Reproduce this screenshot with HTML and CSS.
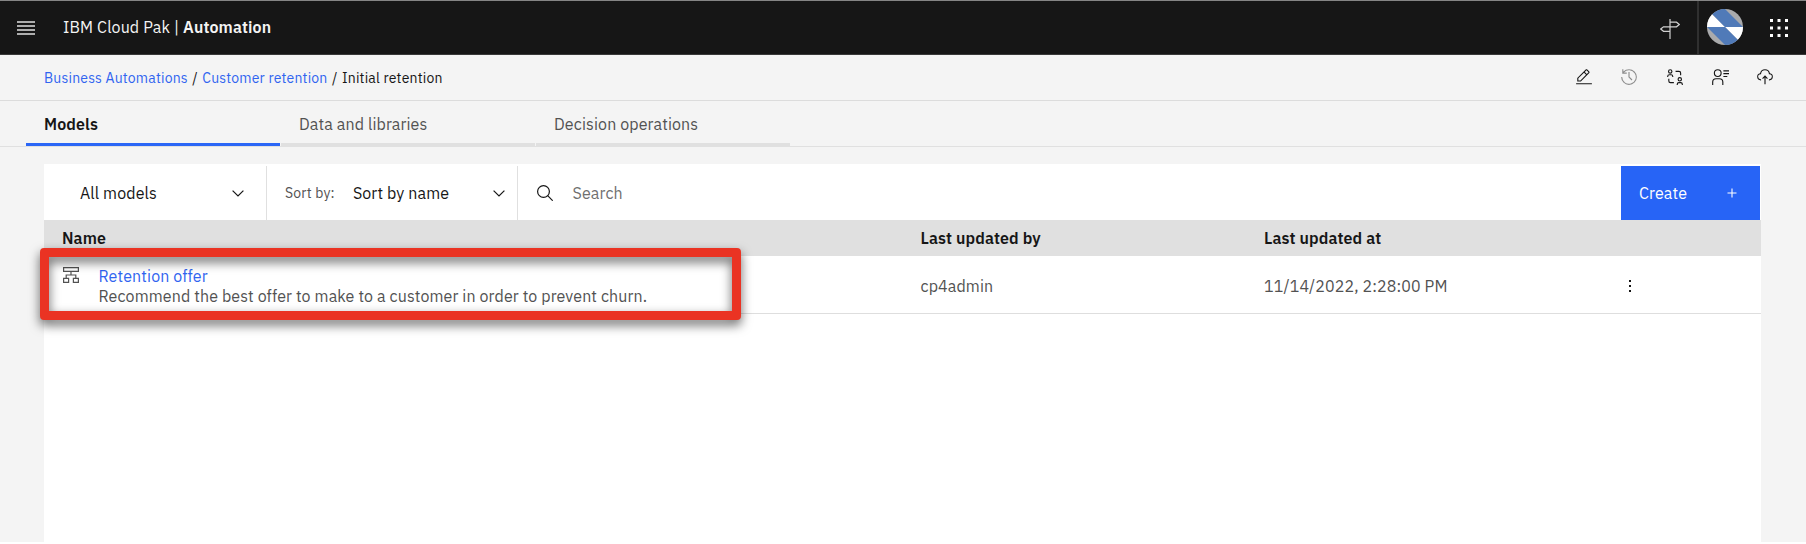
FILE: index.html
```html
<!DOCTYPE html>
<html lang="en">
<head>
<meta charset="utf-8">
<title>IBM Cloud Pak | Automation</title>
<link rel="stylesheet" href="styles.css">
</head>
<body>
<header class="header">
  <svg class="menu" viewBox="0 0 18 14"><path d="M0 1h18M0 5h18M0 9h18M0 13h18"/></svg>
  <div class="brand"><span>IBM Cloud Pak |</span><b>Automation</b></div>
  <svg class="sign" viewBox="0 0 20 20"><path d="M10 0v20M10 3.200h6.500l2.800 2.300-2.800 2.300H3.500L.7 10l2.800 2.300H10"/></svg>
  <div class="account"><svg class="avatar" viewBox="0 0 36 36"><defs><clipPath id="disc"><circle cx="18" cy="18" r="18"/></clipPath></defs><g clip-path="url(#disc)"><path fill="#a9aaac" d="M0 0h36v36H0z"/><path fill="#fff" d="M0 0L18 18H0zM18 18h18v18z"/><path fill="#507ab8" d="M0 0h18l18 18H18zM0 18h18l18 18H18z"/></g></svg></div>
  <svg class="apps" viewBox="0 0 18 18"><path d="M0 0h3v3H0zM7.500 0h3v3h-3zM15 0h3v3h-3zM0 7.500h3v3H0zM7.500 7.500h3v3h-3zM15 7.500h3v3h-3zM0 15h3v3H0zM7.500 15h3v3h-3zM15 15h3v3h-3z"/></svg>
</header>
<nav class="crumbs">
  <a>Business Automations</a><i>/</i><a>Customer retention</a><i>/</i><span>Initial retention</span>
  <div class="tools">
    <svg viewBox="0 0 32 32"><path d="M2 27h28v2H2zM25.400 9c.8-.8.8-2 0-2.800l-3.600-3.600c-.8-.8-2-.8-2.800 0l-15 15V24h6.400l15-15zm-5-5L24 7.600l-3 3L17.400 7l3-3zM6 22v-3.600l10-10 3.600 3.600-10 10H6z"/></svg>
    <svg class="dim" viewBox="0 0 32 32"><path d="M20.590 22 15 16.410V7h2v8.580l5 5.010L20.590 22zM16 2A13.940 13.940 0 0 0 6 6.230V2H4v8h8V8H7.080A12 12 0 1 1 4 16H2A14 14 0 1 0 16 2z"/></svg>
    <svg viewBox="0 0 32 32"><path d="M24.500 24a4 4 0 1 1 0-8 4 4 0 0 1 0 8m0-6a2 2 0 1 0 0 4 2 2 0 0 0 0-4M30 30h-2v-1a2 2 0 0 0-2-2h-3a2 2 0 0 0-2 2v1h-2v-1a4 4 0 0 1 4-4h3a4 4 0 0 1 4 4zM7.500 10a4 4 0 1 1 0-8 4 4 0 0 1 0 8m0-6a2 2 0 1 0 0 4 2 2 0 0 0 0-4M13 16h-2v-1a2 2 0 0 0-2-2H6a2 2 0 0 0-2 2v1H2v-1a4 4 0 0 1 4-4h3a4 4 0 0 1 4 4zM17 5h6a4 4 0 0 1 4 4v4h-2V9a2 2 0 0 0-2-2h-6zM4 19h2v4a2 2 0 0 0 2 2h6v2H8a4 4 0 0 1-4-4z"/></svg>
    <svg viewBox="0 0 32 32"><path d="M22 4h10v2H22zM22 9h10v2H22zM22 14h7v2h-7zM22 30h-2v-5a5 5 0 0 0-5-5H9a5 5 0 0 0-5 5v5H2v-5a7 7 0 0 1 7-7h6a7 7 0 0 1 7 7zM12 4a5 5 0 1 1-5 5 5 5 0 0 1 5-5m0-2a7 7 0 1 0 0 14 7 7 0 0 0 0-14z"/></svg>
    <svg viewBox="0 0 32 32"><path d="m11 18 1.410 1.410L15 16.830V29h2V16.830l2.590 2.580L21 18l-5-5-5 5z"/><path d="M23.500 22H23v-2h.5a4.500 4.500 0 0 0 .36-9H23l-.1-.82a7 7 0 0 0-13.880 0L9 11h-.86a4.500 4.500 0 0 0 .36 9H9v2h-.5A6.500 6.500 0 0 1 7.200 9.140a9 9 0 0 1 17.600 0A6.500 6.500 0 0 1 23.500 22z"/></svg>
  </div>
</nav>
<div class="tabs">
  <div class="tab active">Models</div>
  <div class="tab">Data and libraries</div>
  <div class="tab">Decision operations</div>
</div>
<main class="panel">
  <div class="toolbar">
    <div class="filter"><span>All models</span><svg class="chev" viewBox="0 0 12 7"><path d="M.6.6 6 6 11.400.6"/></svg></div>
    <div class="sort"><small>Sort by:</small><span>Sort by name</span><svg class="chev" viewBox="0 0 12 7"><path d="M.6.6 6 6 11.400.6"/></svg></div>
    <div class="search"><svg class="lens" viewBox="0 0 16 16"><circle cx="6.500" cy="6.500" r="5.900"/><path d="m10.700 10.700 5 5"/></svg><span>Search</span></div>
    <div class="create"><span>Create</span><svg class="plus" viewBox="0 0 10 10"><path d="M5 .5v9M.5 5h9"/></svg></div>
  </div>
  <div class="row head"><div class="name">Name</div><div class="by">Last updated by</div><div class="at">Last updated at</div></div>
  <div class="row item">
    <div class="name">
      <svg class="model" viewBox="0 0 16 16"><path d="M.6.6h14.800v3.800H.6zM8 4.400V8M3.200 11.400V8h9.600v3.400M.6 11.400h5v4h-5zM10.400 11.400h5v4h-5z"/></svg>
      <div class="desc"><a>Retention offer</a><span>Recommend the best offer to make to a customer in order to prevent churn.</span></div>
    </div>
    <div class="by">cp4admin</div>
    <div class="at">11/14/2022, 2:28:00 PM</div>
    <svg class="dots" viewBox="0 0 2 12"><path d="M0 0h2v2H0zM0 5h2v2H0zM0 10h2v2H0z"/></svg>
  </div>
</main>
<div class="highlight"></div>
</body>
</html>
```
FILE: styles.css
```css
* { box-sizing: border-box; }
body { margin: 0; height: 544px; overflow: hidden; display: flex; flex-direction: column; background: #f4f4f4; border-bottom: 2px solid #fff; color: #161616; font: 16px/20px "IBM Plex Sans", Roboto, sans-serif; letter-spacing: .115px; white-space: nowrap; }
svg { display: block; flex: none; }
.header { height: 55px; flex: none; display: flex; align-items: center; padding: 0 18px 0 17px; background: #161616; border-top: 1px solid #858585; border-bottom: 1px solid #393939; color: #f4f4f4; }
.menu { width: 18px; height: 14px; stroke: #e0e0e0; stroke-width: 1.5; }
.brand { display: flex; gap: 4px; margin: 0 0 1px 28px; flex: 1; }
.brand b { font-weight: 600; }
.sign { width: 20px; height: 20px; margin: 3px 17px 0 0; fill: none; stroke: #d0d0d0; stroke-width: 1.2; }
.account { height: 53px; border-left: 2px solid #303030; padding: 8px 0 0 8px; }
.avatar { width: 36px; height: 36px; }
.apps { width: 18px; height: 18px; margin-left: 27px; fill: #fff; }
.crumbs { height: 46px; flex: none; display: flex; align-items: center; padding: 0 32px 0 44px; border-bottom: 1px solid #dcdcdc; font-size: 14px; letter-spacing: .18px; }
.crumbs i { width: 14.5px; text-align: center; font-style: normal; }
a { color: #3064f0; }
.tools { display: flex; gap: 27.25px; margin: 0 0 1px auto; }
.tools svg { width: 18px; height: 18px; fill: #161616; }
.tools .dim { fill: #8d8d8d; }
.tabs { height: 46px; flex: none; display: flex; gap: 1px; padding-left: 26px; border-bottom: 1px solid #e0e0e0; color: #525252; }
.tab { width: 254px; height: 45px; padding: 13px 18px; border-bottom: 3px solid #e0e0e0; }
.tab.active { border-color: #2a66f6; color: #161616; font-weight: 600; }
.panel { width: 1717px; margin: 17px 0 0 44px; flex: 1; background: #fff; }
.toolbar { height: 56px; display: flex; padding: 2px 1px 0 0; }
.toolbar > div { display: flex; align-items: center; }
.chev { width: 12px; height: 7px; margin-left: auto; fill: none; stroke: #161616; stroke-width: 1.2; }
.filter { width: 223px; padding: 0 22px 0 36px; border-right: 1px solid #e0e0e0; }
.sort { width: 251px; padding: 0 12px 0 18px; border-right: 1px solid #e0e0e0; }
.sort small { font-size: 14px; margin-right: 18px; color: #525252; letter-spacing: .17px; }
.search { flex: 1; padding-left: 19px; color: #6f6f6f; }
.lens { width: 16px; height: 16px; margin-right: 19.5px; fill: none; stroke: #161616; stroke-width: 1.2; }
.create { width: 139px; padding: 0 23.5px 0 18px; background: #2764f6; color: #fff; }
.plus { width: 10px; height: 10px; margin-left: auto; stroke: #fff; stroke-width: 1.1; }
.row { display: flex; align-items: center; }
.head { height: 36px; background: #e0e0e0; font-weight: 600; }
.name { width: 876.5px; padding-left: 18px; display: flex; }
.by { width: 343.5px; }
.at { width: 365px; }
.item { height: 58px; padding-top: 2px; border-bottom: 1px solid #dedede; color: #525252; }
.model { width: 16px; height: 16px; margin: 1px 19.5px 0 1px; fill: none; stroke: #525252; stroke-width: 1.2; }
.desc { display: flex; flex-direction: column; align-items: flex-start; }
.dots { width: 2px; height: 12px; fill: #161616; }
.highlight { position: absolute; left: 40px; top: 248px; width: 701px; height: 72px; border: 9px solid #ea3323; border-radius: 4px; filter: drop-shadow(0 5px 5.5px rgba(0,0,0,.6)); }
```
